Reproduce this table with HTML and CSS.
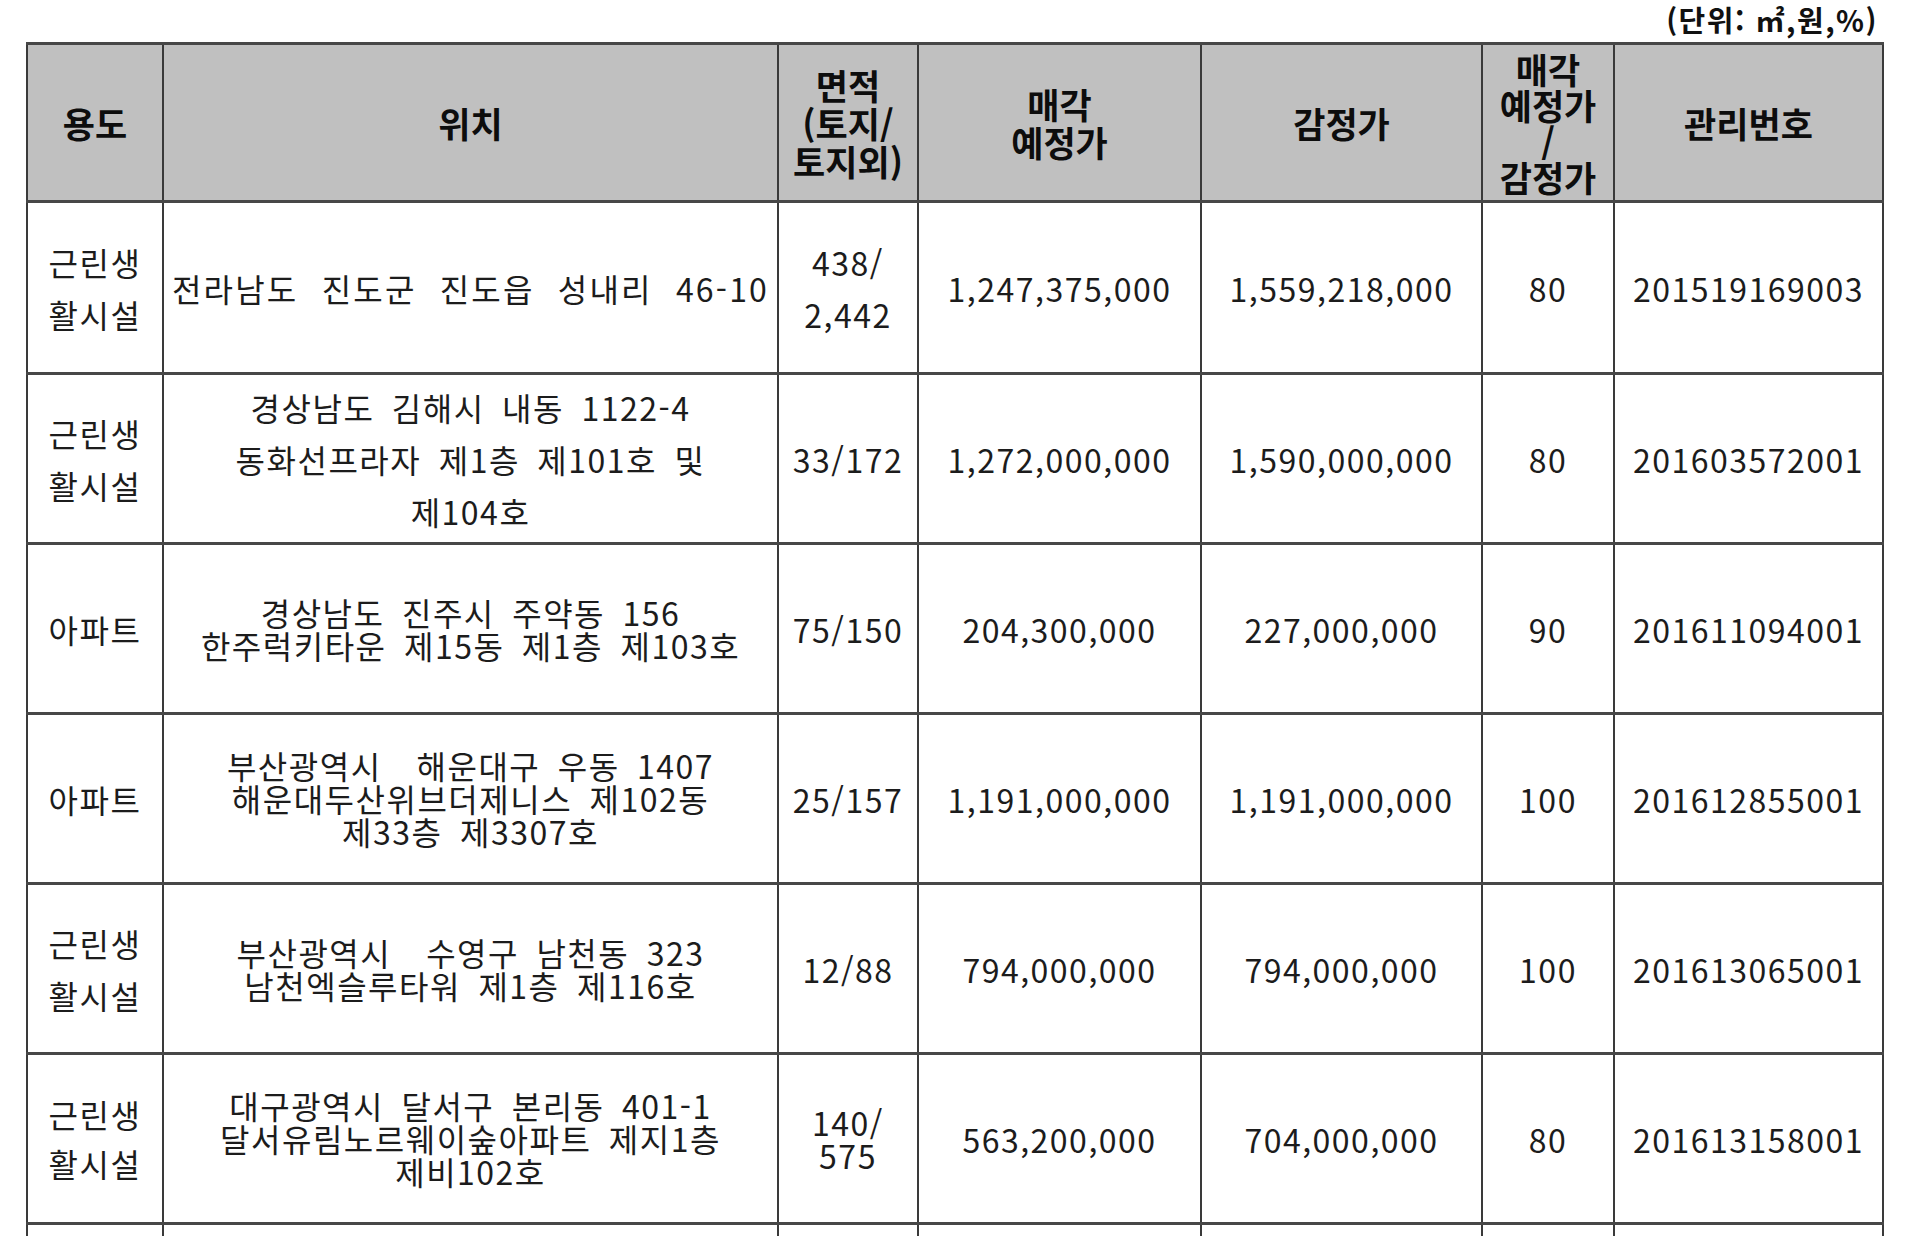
FILE: index.html
```html
<!DOCTYPE html>
<html lang="ko">
<head>
<meta charset="utf-8">
<title>매각 예정 목록</title>
<link rel="stylesheet" href="styles.css">
</head>
<body>
<div class="page">
  <div class="unit-row"><span class="unit">(단위: ㎡,원,%)</span></div>
  <table class="sale-table">
    <colgroup>
      <col class="c-use">
      <col class="c-loc">
      <col class="c-area">
      <col class="c-price">
      <col class="c-appr">
      <col class="c-ratio">
      <col class="c-no">
    </colgroup>
    <thead>
      <tr class="head-row">
        <th>용도</th>
        <th>위치</th>
        <th>면적<br>(토지/<br>토지외)</th>
        <th>매각<br>예정가</th>
        <th>감정가</th>
        <th class="stack">매각<br>예정가<br>/<br>감정가</th>
        <th>관리번호</th>
      </tr>
    </thead>
    <tbody>
      <tr class="row first">
        <td>근린생<br>활시설</td>
        <td class="loc wide">전라남도 진도군 진도읍 성내리 46-10</td>
        <td>438/<br>2,442</td>
        <td>1,247,375,000</td>
        <td>1,559,218,000</td>
        <td>80</td>
        <td>201519169003</td>
      </tr>
      <tr class="row">
        <td>근린생<br>활시설</td>
        <td class="loc">경상남도 김해시 내동 1122-4<br>동화선프라자 제1층 제101호 및<br>제104호</td>
        <td>33/172</td>
        <td>1,272,000,000</td>
        <td>1,590,000,000</td>
        <td>80</td>
        <td>201603572001</td>
      </tr>
      <tr class="row">
        <td>아파트</td>
        <td class="loc tight">경상남도 진주시 주약동 156<br>한주럭키타운 제15동 제1층 제103호</td>
        <td>75/150</td>
        <td>204,300,000</td>
        <td>227,000,000</td>
        <td>90</td>
        <td>201611094001</td>
      </tr>
      <tr class="row">
        <td>아파트</td>
        <td class="loc tight">부산광역시&nbsp; 해운대구 우동 1407<br>해운대두산위브더제니스 제102동<br>제33층 제3307호</td>
        <td>25/157</td>
        <td>1,191,000,000</td>
        <td>1,191,000,000</td>
        <td>100</td>
        <td>201612855001</td>
      </tr>
      <tr class="row">
        <td>근린생<br>활시설</td>
        <td class="loc tight">부산광역시&nbsp; 수영구 남천동 323<br>남천엑슬루타워 제1층 제116호</td>
        <td>12/88</td>
        <td>794,000,000</td>
        <td>794,000,000</td>
        <td>100</td>
        <td>201613065001</td>
      </tr>
      <tr class="row">
        <td class="mid">근린생<br>활시설</td>
        <td class="loc tight">대구광역시 달서구 본리동 401-1<br>달서유림노르웨이숲아파트 제지1층<br>제비102호</td>
        <td class="tight">140/<br>575</td>
        <td>563,200,000</td>
        <td>704,000,000</td>
        <td>80</td>
        <td>201613158001</td>
      </tr>
      <tr class="row">
        <td></td><td></td><td></td><td></td><td></td><td></td><td></td>
      </tr>
    </tbody>
  </table>
</div>
</body>
</html>
```
FILE: styles.css
```css
html, body {
  margin: 0;
  padding: 0;
  background: #ffffff;
}

.page {
  height: 1236px;
  overflow: hidden;
  padding-left: 26px;
  font-family: "Noto Sans CJK KR", "Noto Sans", sans-serif;
  color: #1c1c1c;
}

.unit-row {
  width: 1858px;
  height: 42px;
  display: flex;
  justify-content: flex-end;
  align-items: flex-start;
}

.unit {
  font-size: 29px;
  font-weight: 700;
  line-height: 42px;
  letter-spacing: 1.5px;
  color: #111;
  padding-right: 6px;
  margin-top: -2px;
}

.sale-table {
  border-collapse: collapse;
  table-layout: fixed;
  width: 1856px;
}

.c-use { width: 136px; }
.c-loc { width: 615px; }
.c-area { width: 140px; }
.c-price { width: 283px; }
.c-appr { width: 281px; }
.c-ratio { width: 132px; }
.c-no { width: 269px; }

.sale-table th,
.sale-table td {
  border-left: 2px solid #3a3a3a;
  border-right: 2px solid #3a3a3a;
  border-top: 3px solid #474747;
  border-bottom: 3px solid #474747;
  padding: 0 2px;
  text-align: center;
  vertical-align: middle;
}

.head-row {
  height: 158px;
}

.sale-table th {
  background: #c0c0c0;
  font-size: 35px;
  font-weight: 700;
  line-height: 38px;
  color: #0d0d0d;
  white-space: nowrap;
}

.sale-table th.stack {
  line-height: 36px;
}

.row {
  height: 170px;
}

.row.first {
  height: 172px;
}

.sale-table td {
  font-size: 32px;
  font-weight: 400;
  line-height: 52px;
  letter-spacing: 1.5px;
  white-space: nowrap;
}

.sale-table td.loc {
  word-spacing: 7px;
}

.sale-table td.loc.wide {
  letter-spacing: 2.2px;
  word-spacing: 12px;
}

.sale-table td.tight {
  line-height: 33px;
}

.sale-table td.mid {
  line-height: 49px;
}
```
